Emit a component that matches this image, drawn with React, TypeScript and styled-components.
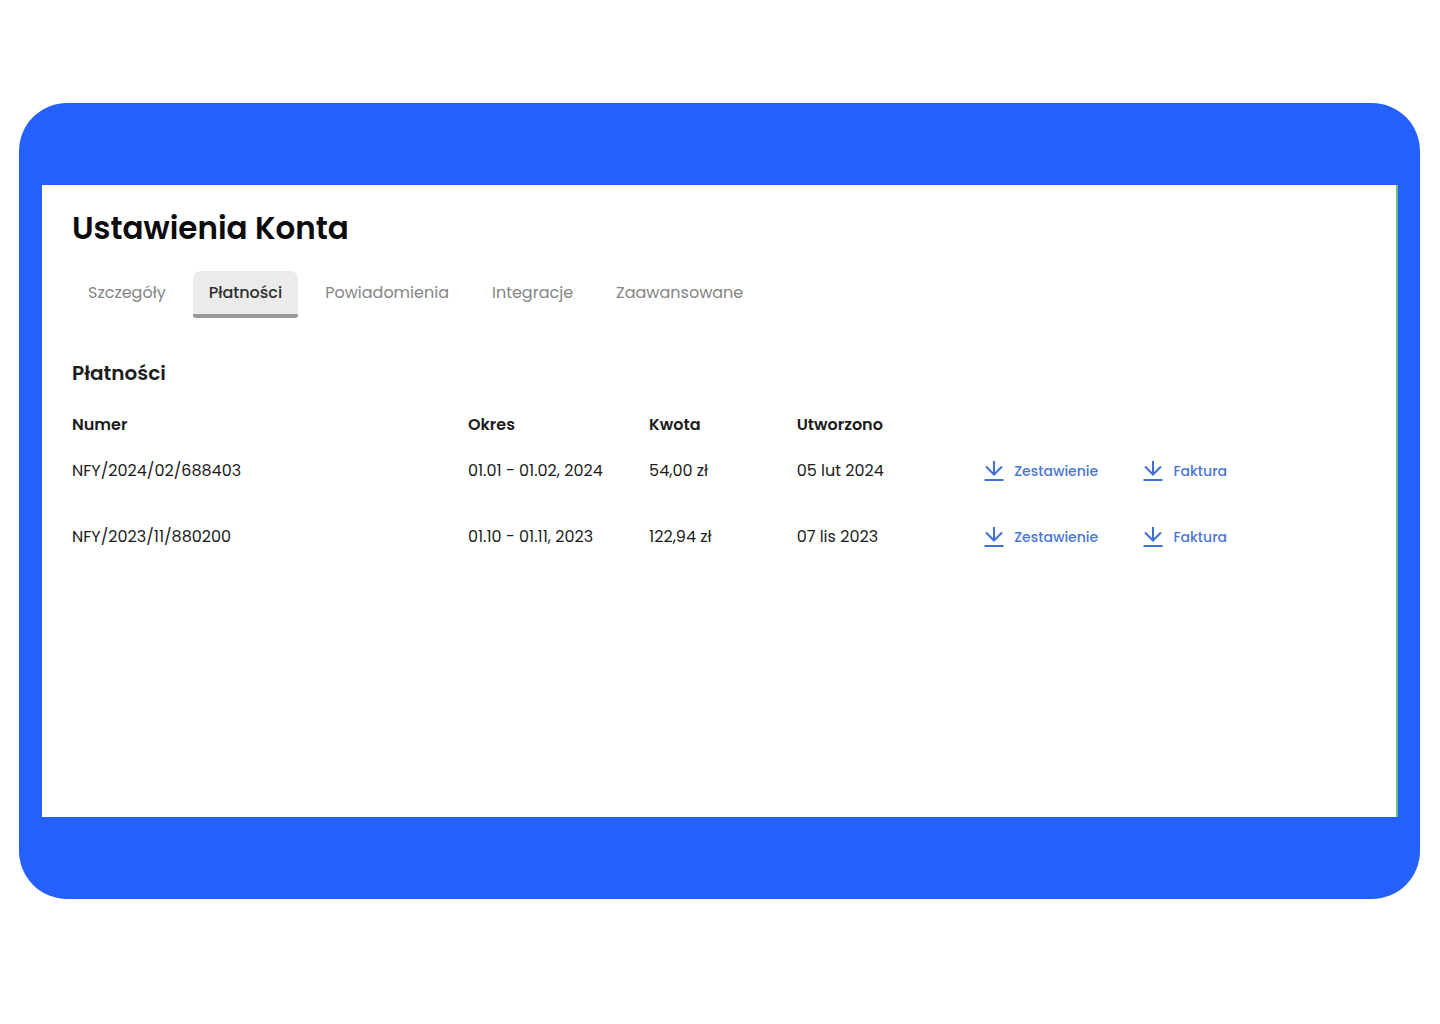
import React, { useState } from "react";
import styled, { createGlobalStyle } from "styled-components";

const GlobalStyle = createGlobalStyle`
  *, *::before, *::after { box-sizing: border-box; }
  body {
    margin: 0;
    background: #ffffff;
    color: #1c1c1c;
    font-family: Poppins, Inter, "Liberation Sans", sans-serif;
    font-size: 16px;
    line-height: 24px;
  }
`;

const Page = styled.div`
  padding: 103px 20px 48px 19px;
`;

const Frame = styled.div`
  padding: 82px 22px 82px 23px;
  border-radius: 48px;
  background: #2660fa;
`;

const Panel = styled.main`
  min-height: 632px;
  padding: 24px 30px;
  border-right: 2px solid #62c48a;
  background: #ffffff;
`;

const Title = styled.h1`
  margin: 0;
  color: #0b0b0b;
  font-size: 31px;
  font-weight: 600;
  line-height: 38px;
`;

const Tabs = styled.nav`
  display: flex;
  gap: 11px;
  margin-top: 24px;
`;

const Tab = styled.button<{ $active: boolean }>`
  height: 47px;
  padding: 0 16px;
  border: 0;
  border-bottom: 4px solid ${(p) => (p.$active ? "#999999" : "transparent")};
  border-radius: 8px 8px 3px 3px;
  background: ${(p) => (p.$active ? "#ebebeb" : "transparent")};
  color: ${(p) => (p.$active ? "#303030" : "#858585")};
  font: inherit;
  font-weight: ${(p) => (p.$active ? 500 : 400)};
  cursor: pointer;
`;

const SectionTitle = styled.h2`
  margin: 43px 0 0;
  font-size: 20px;
  font-weight: 600;
  line-height: 24px;
`;

const Table = styled.table`
  width: 100%;
  margin-top: 27px;
  border-collapse: collapse;
  table-layout: fixed;
`;

const Column = styled.col<{ $share?: string }>`
  width: ${(p) => p.$share ?? "auto"};
`;

const HeaderCell = styled.th`
  height: 26px;
  padding: 0;
  font-weight: 600;
  text-align: left;
`;

const Cell = styled.td`
  height: 66px;
  padding: 0;
  white-space: nowrap;
`;

const DownloadLink = styled.a`
  display: flex;
  align-items: center;
  gap: 10px;
  width: fit-content;
  color: #4a76d6;
  font-size: 14px;
  font-weight: 500;
  text-decoration: none;
`;

const DownloadIcon = () => (
  <svg width="20" height="22" viewBox="0 0 20 22" fill="none" stroke="#3f6fd8" strokeWidth="2" aria-hidden="true">
    <path d="M10 1v13.5M2 6.5l8 8 8-8M0.5 20h19" />
  </svg>
);

const tabs = ["Szczegóły", "Płatności", "Powiadomienia", "Integracje", "Zaawansowane"];
const shares = ["30.6%", "14%", "11.4%", "14.5%", "12.3%"];
const payments = [
  { id: "NFY/2024/02/688403", period: "01.01 - 01.02, 2024", amount: "54,00 zł", created: "05 lut 2024" },
  { id: "NFY/2023/11/880200", period: "01.10 - 01.11, 2023", amount: "122,94 zł", created: "07 lis 2023" },
];

export default function App() {
  const [active, setActive] = useState("Płatności");
  return (
    <>
      <GlobalStyle />
      <Page>
        <Frame>
          <Panel>
            <Title>Ustawienia Konta</Title>
            <Tabs>
              {tabs.map((tab) => (
                <Tab key={tab} type="button" $active={tab === active} onClick={() => setActive(tab)}>
                  {tab}
                </Tab>
              ))}
            </Tabs>
            <SectionTitle id="payments">Płatności</SectionTitle>
            <Table aria-labelledby="payments">
              <colgroup>
                {shares.map((share) => (
                  <Column key={share} $share={share} />
                ))}
                <Column />
              </colgroup>
              <thead>
                <tr>
                  <HeaderCell scope="col">Numer</HeaderCell>
                  <HeaderCell scope="col">Okres</HeaderCell>
                  <HeaderCell scope="col">Kwota</HeaderCell>
                  <HeaderCell scope="col">Utworzono</HeaderCell>
                  <HeaderCell as="td" colSpan={2} />
                </tr>
              </thead>
              <tbody>
                {payments.map((p) => (
                  <tr key={p.id}>
                    <Cell>{p.id}</Cell>
                    <Cell>{p.period}</Cell>
                    <Cell>{p.amount}</Cell>
                    <Cell>{p.created}</Cell>
                    <Cell>
                      <DownloadLink href="#zestawienie">
                        <DownloadIcon />
                        Zestawienie
                      </DownloadLink>
                    </Cell>
                    <Cell>
                      <DownloadLink href="#faktura">
                        <DownloadIcon />
                        Faktura
                      </DownloadLink>
                    </Cell>
                  </tr>
                ))}
              </tbody>
            </Table>
          </Panel>
        </Frame>
      </Page>
    </>
  );
}
